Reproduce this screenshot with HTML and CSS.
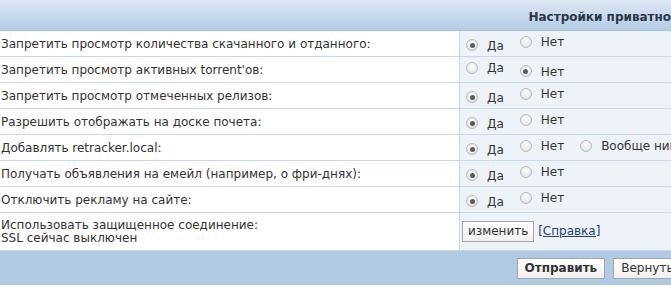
FILE: index.html
```html
<!DOCTYPE html>
<html lang="ru">
<head>
<meta charset="utf-8">
<title>Настройки приватности</title>
<link rel="stylesheet" href="styles.css">
</head>
<body>
<div class="viewport">
<table class="settings">
  <thead>
    <tr><th colspan="2" class="cat">Настройки приватности</th></tr>
  </thead>
  <tbody>
    <tr>
      <td class="lbl">Запретить просмотр количества скачанного и отданного:</td>
      <td class="opt"><label class="radio"><span class="dot on"></span><span class="t">Да</span></label><label class="radio"><span class="dot"></span><span class="t">Нет</span></label></td>
    </tr>
    <tr>
      <td class="lbl">Запретить просмотр активных torrent'ов:</td>
      <td class="opt"><label class="radio"><span class="dot"></span><span class="t">Да</span></label><label class="radio"><span class="dot on"></span><span class="t">Нет</span></label></td>
    </tr>
    <tr>
      <td class="lbl">Запретить просмотр отмеченных релизов:</td>
      <td class="opt"><label class="radio"><span class="dot on"></span><span class="t">Да</span></label><label class="radio"><span class="dot"></span><span class="t">Нет</span></label></td>
    </tr>
    <tr>
      <td class="lbl">Разрешить отображать на доске почета:</td>
      <td class="opt"><label class="radio"><span class="dot on"></span><span class="t">Да</span></label><label class="radio"><span class="dot"></span><span class="t">Нет</span></label></td>
    </tr>
    <tr>
      <td class="lbl">Добавлять retracker.local:</td>
      <td class="opt"><label class="radio"><span class="dot on"></span><span class="t">Да</span></label><label class="radio"><span class="dot"></span><span class="t">Нет</span></label><label class="radio"><span class="dot"></span><span class="t">Вообще никогда</span></label></td>
    </tr>
    <tr>
      <td class="lbl">Получать объявления на емейл (например, о фри-днях):</td>
      <td class="opt"><label class="radio"><span class="dot on"></span><span class="t">Да</span></label><label class="radio"><span class="dot"></span><span class="t">Нет</span></label></td>
    </tr>
    <tr>
      <td class="lbl">Отключить рекламу на сайте:</td>
      <td class="opt"><label class="radio"><span class="dot on"></span><span class="t">Да</span></label><label class="radio"><span class="dot"></span><span class="t">Нет</span></label></td>
    </tr>
    <tr class="tall">
      <td class="lbl">Использовать защищенное соединение:<br>SSL сейчас выключен</td>
      <td class="opt ssl"><button class="btn" type="button">изменить</button> <a class="help" href="#">[Справка]</a></td>
    </tr>
  </tbody>
  <tfoot>
    <tr><td colspan="2" class="foot"><button class="btn main" type="button">Отправить</button><button class="btn" type="button">Вернуть</button></td></tr>
  </tfoot>
</table>
</div>
</body>
</html>
```
FILE: styles.css
```css
html, body {
  margin: 0;
  padding: 0;
  background: #fff;
}
.viewport {
  width: 671px;
  height: 295px;
  overflow: hidden;
}
.settings {
  width: 1222px;
  border-collapse: collapse;
  font-family: "DejaVu Sans", Verdana, sans-serif;
  font-size: 12px;
  color: #333;
}
.cat {
  height: 26px;
  padding: 4px 0 0;
  background: linear-gradient(#dde8f5, #b3cce6);
  border-bottom: 1px solid #a9c3de;
  font-weight: bold;
  color: #2b3646;
  text-align: center;
}
.settings tbody td {
  height: 25px;
  padding: 0;
  border-bottom: 1px solid #c9d8e9;
  vertical-align: middle;
}
.lbl {
  width: 458px;
  padding-left: 1px !important;
  background: #fff;
  border-right: 1px solid #c9d8e9;
}
.opt {
  background: #eef3f9;
  padding-left: 6px !important;
}
.opt.ssl {
  padding-left: 2px !important;
}
.radio {
  display: inline-flex;
  align-items: center;
  gap: 9px;
  margin-right: 16px;
}
.radio .t {
  padding-top: 1px;
}
.dot {
  box-sizing: border-box;
  width: 12px;
  height: 12px;
  border-radius: 50%;
  border: 1px solid #b9b9b9;
  background: radial-gradient(circle at 50% 35%, #ffffff, #dcdcdc);
  display: inline-flex;
  align-items: center;
  justify-content: center;
}
.dot.on::after {
  content: "";
  width: 5px;
  height: 5px;
  border-radius: 50%;
  background: #5a5a5a;
}
.tall td {
  height: 37px !important;
  line-height: 13px;
}
.btn {
  font-family: "DejaVu Sans", Verdana, sans-serif;
  font-size: 12px;
  color: #333;
  background: linear-gradient(#ffffff, #f0f0f0);
  border: 1px solid #a6a6a6;
  padding: 2px 5px 3px;
  margin: 0;
}
.help {
  color: #23426e;
  text-decoration: underline;
}
.foot {
  height: 34px;
  padding: 0 24px 0 0;
  background: #b1cae3;
  text-align: center;
}
.foot .btn {
  margin: 0 4px;
  padding: 2px 7px 3px;
}
.foot .btn.main {
  font-weight: bold;
}
```
